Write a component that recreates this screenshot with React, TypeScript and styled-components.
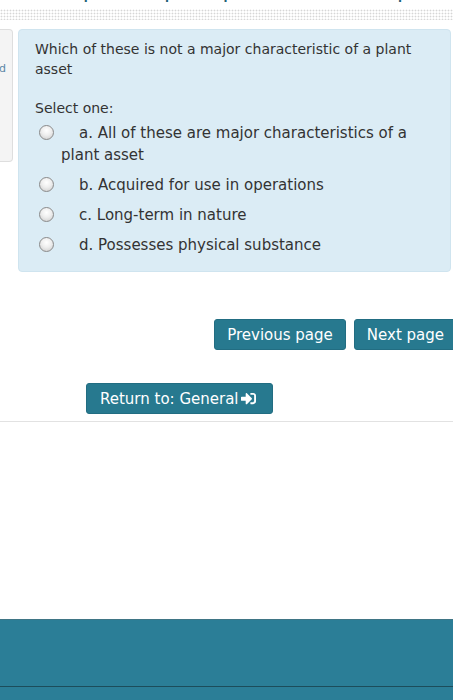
import React from "react";
import styled, { createGlobalStyle } from "styled-components";
import { FaSignInAlt } from "react-icons/fa";

const GlobalStyle = createGlobalStyle`
  html, body {
    margin: 0;
    padding: 0;
    background: #ffffff;
  }
  body {
    font-family: "DejaVu Sans", Verdana, sans-serif;
    color: #333333;
  }
`;

const Page = styled.div`
  width: 453px;
  height: 700px;
  display: flex;
  flex-direction: column;
  overflow: hidden;
`;

const TitleStrip = styled.div`
  height: 5px;
  overflow: hidden;
`;

const TitleText = styled.h2`
  margin: -20px 0 0 40px;
  font-size: 22px;
  line-height: 22px;
  font-weight: normal;
  color: #1f6276;
  white-space: nowrap;
`;

const DottedBand = styled.div`
  margin-top: 4px;
  height: 11px;
  background-image: radial-gradient(circle, #d6d6d6 0.8px, transparent 1.1px);
  background-size: 3px 3px;
`;

const MainRow = styled.div`
  display: flex;
  align-items: flex-start;
  gap: 5px;
  margin-top: 9px;
  padding-right: 2px;
`;

const InfoPanel = styled.div`
  width: 13px;
  height: 133px;
  flex-shrink: 0;
  background: #f4f4f4;
  border: 1px solid #dedede;
  border-left: none;
  border-radius: 0 4px 4px 0;
  overflow: hidden;
  display: flex;
  justify-content: flex-end;
  padding-top: 32px;
  box-sizing: border-box;
`;

const FlagText = styled.span`
  font-size: 11px;
  color: #5b87a6;
  white-space: nowrap;
  margin-right: 6px;
`;

const QuestionBox = styled.div`
  flex: 1;
  background: #dbecf5;
  border: 1px solid #cfe4ef;
  border-radius: 4px;
  padding: 9px 16px 15px 16px;
  font-size: 14px;
  line-height: 20px;
`;

const QuestionText = styled.p`
  margin: 0 0 19px 0;
  line-height: 20px;
`;

const Prompt = styled.div`
  margin-bottom: 4px;
`;

const Options = styled.div`
  display: flex;
  flex-direction: column;
  gap: 8px;
  font-size: 15px;
`;

const Option = styled.div`
  padding-left: 26px;
  text-indent: -22px;
  line-height: 22px;
`;

const Radio = styled.span`
  display: inline-block;
  width: 13px;
  height: 13px;
  border: 1px solid #8a8a8a;
  border-radius: 50%;
  background: radial-gradient(circle at 50% 35%, #ffffff 0%, #eeeeee 45%, #c9c9c9 100%);
  vertical-align: -2px;
  margin-right: 25px;
  text-indent: 0;
`;

const ButtonRow = styled.div<{ align: "left" | "right" }>`
  display: flex;
  justify-content: ${(p) => (p.align === "right" ? "flex-end" : "flex-start")};
  gap: 8px;
`;

const NavRow = styled(ButtonRow)`
  margin-top: 47px;
  margin-right: -4px;
`;

const ReturnRow = styled(ButtonRow)`
  margin-top: 33px;
  padding-left: 86px;
`;

const Button = styled.button`
  height: 31px;
  padding: 0 12px;
  background: #27798f;
  border: 1px solid #226d82;
  border-radius: 3px;
  color: #ffffff;
  font-family: "DejaVu Sans", Verdana, sans-serif;
  font-size: 15px;
  display: inline-flex;
  align-items: center;
  gap: 2px;
  cursor: pointer;
`;

const ReturnButton = styled(Button)`
  padding-left: 13px;
  padding-right: 16px;
`;

const Divider = styled.hr`
  margin: 7px 0 0 0;
  border: none;
  border-top: 1px solid #e2e2e2;
`;

const Spacer = styled.div`
  flex: 1;
`;

const Footer = styled.footer`
  height: 81px;
  box-sizing: border-box;
  flex-shrink: 0;
  background: #2b7e97;
  border-top: 1px solid #3f7585;
`;

const FooterBody = styled.div`
  height: 66px;
  border-bottom: 1px solid #1c4d5b;
`;

const options = [
  "a. All of these are major characteristics of a plant asset",
  "b. Acquired for use in operations",
  "c. Long-term in nature",
  "d. Possesses physical substance",
];

export default function App() {
  return (
    <Page>
      <GlobalStyle />
      <TitleStrip>
        <TitleText>Chapter 9 quiz · plant assets, depreciation and intangibles</TitleText>
      </TitleStrip>
      <DottedBand />
      <MainRow>
        <InfoPanel>
          <FlagText>Flagged</FlagText>
        </InfoPanel>
        <QuestionBox>
          <QuestionText>Which of these is not a major characteristic of a plant asset</QuestionText>
          <Prompt>Select one:</Prompt>
          <Options>
            {options.map((text) => (
              <Option key={text}>
                <Radio />
                {text}
              </Option>
            ))}
          </Options>
        </QuestionBox>
      </MainRow>
      <NavRow align="right">
        <Button>Previous page</Button>
        <Button>Next page</Button>
      </NavRow>
      <ReturnRow align="left">
        <ReturnButton>
          Return to: General
          <FaSignInAlt size={15} />
        </ReturnButton>
      </ReturnRow>
      <Divider />
      <Spacer />
      <Footer>
        <FooterBody />
      </Footer>
    </Page>
  );
}
